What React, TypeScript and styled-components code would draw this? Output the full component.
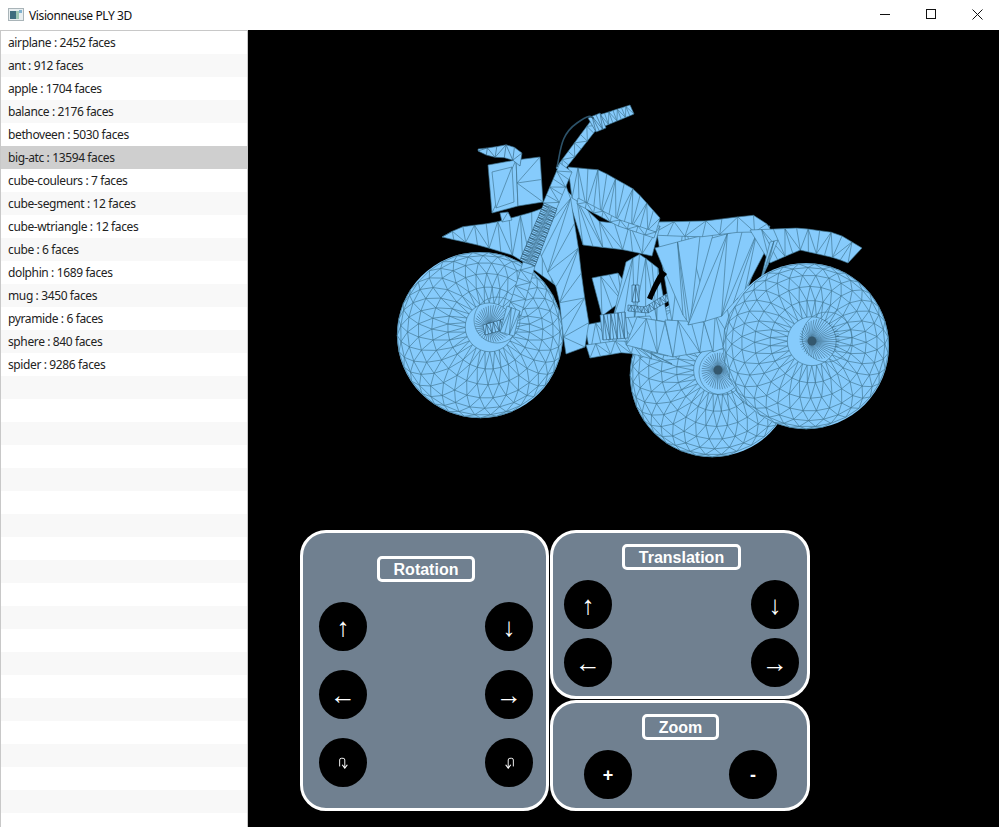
import React from 'react';
import styled, { createGlobalStyle } from 'styled-components';

const Global = createGlobalStyle`
  html, body { margin: 0; padding: 0; background: #000; }
  * { box-sizing: border-box; }
`;

const Window = styled.div`
  width: 999px; height: 827px; display: flex; flex-direction: column; overflow: hidden;
  font-family: "Noto Sans", "Open Sans", sans-serif; background: #fff;
`;
const TitleBar = styled.header`
  height: 30px; flex: none; display: flex; align-items: center; background: #fff; padding-left: 8px;
`;
const AppIcon = styled.svg` width: 16px; height: 16px; flex: none; margin-right: 5px; `;
const TitleText = styled.span` font-size: 12px; letter-spacing: -0.38px; color: #111; flex: 1; `;
const WindowButton = styled.div`
  width: 46px; height: 30px; padding: 0 0 2px 2px; display: flex; align-items: center; justify-content: center;
`;
const Body = styled.div` flex: 1; display: flex; min-height: 0; `;
const Sidebar = styled.ul`
  width: 248px; flex: none; margin: 0; padding: 0; list-style: none; overflow: hidden;
  border: 1px solid #c8c8c8; border-bottom: 0; background: #fff;
`;
const Row = styled.li<{ $alt: boolean; $selected: boolean }>`
  height: 23px; padding-left: 7px; font-size: 12px; line-height: 24px; letter-spacing: -0.38px; color: #222; white-space: nowrap;
  background: ${p => (p.$selected ? '#cfcfcf' : p.$alt ? '#f8f8f8' : '#fff')};
`;
const Viewport = styled.main` flex: 1; display: flex; flex-direction: column; background: #000; `;
const SceneSvg = styled.svg` display: block; width: 751px; height: 500px; flex: none; `;
const Controls = styled.section` display: flex; padding-left: 52px; gap: 1px; height: 281px; `;
const Stack = styled.div` display: flex; flex-direction: column; gap: 1px; width: 260px; `;
const Panel = styled.div<{ $w?: number; $h: number; $top: number; $l: number; $r: number }>`
  width: ${p => (p.$w ? `${p.$w}px` : '100%')}; height: ${p => p.$h}px; background: #708090;
  border: 3px solid #fff; border-radius: 26px; display: flex; flex-direction: column;
  padding: ${p => p.$top}px ${p => p.$r}px 0 ${p => p.$l}px;
`;
const Heading = styled.div<{ $w: number; $mb: number }>`
  width: ${p => p.$w}px; height: 26px; margin: 0 auto ${p => p.$mb}px; flex: none; padding-top: 1px;
  border: 3px solid #fff; border-radius: 5px; color: #fff; text-align: center;
  font: bold 16px/20px "Liberation Sans", Arial, sans-serif;
`;
const ButtonGrid = styled.div<{ $gap: number }>`
  display: grid; grid-template-columns: 48px 48px; justify-content: space-between; row-gap: ${p => p.$gap}px;
`;
const RoundButton = styled.button`
  width: 48px; height: 49px; padding: 0; border: 0; border-radius: 50%; background: #000; color: #fff;
  display: flex; align-items: center; justify-content: center;
  font: 26px/1 "Liberation Sans", Arial, sans-serif;
`;
const Sign = styled.span` font: bold 18px/1 "Liberation Sans", Arial, sans-serif; `;

type P = [number, number];
const FILL = '#86cbfc';
const LINE = '#40748f';
const DARK = '#2f5a73';

function resample(pts: P[], n: number): P[] {
  const d = [0];
  for (let i = 1; i < pts.length; i++) d.push(d[i - 1] + Math.hypot(pts[i][0] - pts[i - 1][0], pts[i][1] - pts[i - 1][1]));
  const total = d[d.length - 1];
  const out: P[] = [];
  for (let k = 0; k <= n; k++) {
    const t = (total * k) / n;
    let i = 1;
    while (i < pts.length - 1 && d[i] < t) i++;
    const f = (t - d[i - 1]) / (d[i] - d[i - 1] || 1);
    out.push([pts[i - 1][0] + (pts[i][0] - pts[i - 1][0]) * f, pts[i - 1][1] + (pts[i][1] - pts[i - 1][1]) * f]);
  }
  return out;
}
const f1 = (v: number) => v.toFixed(1);
const seg = (a: P, b: P) => `M${f1(a[0])} ${f1(a[1])}L${f1(b[0])} ${f1(b[1])}`;
const disc = (x: number, y: number, r: number) => `M${x - r} ${y}a${r} ${r} 0 1 0 ${2 * r} 0a${r} ${r} 0 1 0 ${-2 * r} 0Z`;

interface Part { fill: string; lines: string; color?: string; width?: number; solid?: string }

function strip(a: P[], b: P[], n: number, color?: string, width?: number): Part {
  const A = resample(a, n);
  const B = resample(b, n);
  let lines = '';
  for (let i = 0; i < n; i++) {
    lines += seg(A[i], A[i + 1]) + seg(B[i], B[i + 1]) + seg(A[i], B[i]);
    lines += i % 2 ? seg(A[i], B[i + 1]) : seg(B[i], A[i + 1]);
  }
  lines += seg(A[n], B[n]);
  const poly = [...A, ...[...B].reverse()];
  const fill = 'M' + poly.map(p => `${f1(p[0])} ${f1(p[1])}`).join('L') + 'Z';
  return { fill, lines, color, width };
}

function wheel(cx: number, cy: number, r: number, hx: number, hy: number, rx: number, ry: number, rr: number): Part[] {
  const px = (hx - cx) / r;
  const py = (hy - cy) / r;
  const pz = Math.sqrt(1 - px * px - py * py);
  const ul = Math.hypot(pz, px);
  const u = [pz / ul, 0, -px / ul];
  const v = [py * u[2] - pz * u[1], pz * u[0] - px * u[2], px * u[1] - py * u[0]];
  const M = 32;
  const pt = (theta: number, phi: number) => {
    const s = Math.sin(theta), c = Math.cos(theta), cp = Math.cos(phi), sp = Math.sin(phi);
    return {
      x: cx + r * (c * px + s * (cp * u[0] + sp * v[0])),
      y: cy + r * (c * py + s * (cp * u[1] + sp * v[1])),
      z: c * pz + s * (cp * u[2] + sp * v[2]),
    };
  };
  const rings = 7;
  const t0 = 0.3;
  const step = 0.22;
  let lines = '';
  const add = (a: ReturnType<typeof pt>, b: ReturnType<typeof pt>) => {
    if (a.z > -0.02 && b.z > -0.02) lines += seg([a.x, a.y], [b.x, b.y]);
  };
  const dphi = (Math.PI * 2) / M;
  for (let i = 0; i < rings; i++) {
    const t = t0 + i * step;
    for (let j = 0; j < M; j++) {
      const ph = (j + (i % 2) * 0.5) * dphi;
      const a = pt(t, ph);
      add(a, pt(t, ph + dphi));
      add(a, pt(t + step, ph + dphi / 2));
      add(a, pt(t + step, ph - dphi / 2));
    }
  }
  let spokes = '';
  const S = 44;
  for (let j = 0; j < S; j++) {
    const ph = (j * Math.PI * 2) / S;
    const a: P = [hx + 3 * Math.cos(ph), hy + 3 * Math.sin(ph)];
    const b: P = [(rx + hx) / 2 + rr * 0.8 * Math.cos(ph), (ry + hy) / 2 + rr * 0.8 * Math.sin(ph)];
    spokes += seg(a, b);
  }
  return [
    { fill: disc(cx, cy, r), lines },
    { fill: '', lines: disc(rx, ry, rr), color: LINE, width: 0.6 },
    { fill: '', lines: spokes, color: '#2f566e', width: 0.5 },
    { fill: '', lines: '', solid: disc(hx, hy, 4.5) },
  ];
}

const scene: Part[] = [
  ...wheel(712, 375, 82, 718, 370, 722, 372, 23),
  // engine
  strip([[592, 278], [618, 273]], [[602, 316], [632, 293]], 3),
  strip([[626, 262], [640, 254], [658, 268]], [[612, 322], [640, 318], [668, 322]], 5),
  strip([[628, 305], [645, 307], [668, 293]], [[628, 311], [648, 313], [672, 299]], 14, '#33627d'),
  strip([[632, 285], [639, 285]], [[632, 302], [639, 302]], 2, '#2d5770'),
  // rear backing
  strip([[655, 222], [712, 222], [770, 226]], [[672, 322], [700, 330], [745, 296]], 4),
  strip([[585, 325], [620, 318], [650, 316]], [[590, 354], [630, 348], [668, 356]], 6),
  strip([[600, 315], [625, 312]], [[603, 340], [628, 338]], 7, '#33627d'),
  strip([[586, 345], [622, 340], [660, 358]], [[590, 358], [625, 352], [672, 364]], 8),
  strip([[637, 317], [665, 322]], [[626, 345], [673, 357]], 3),
  strip([[665, 320], [704, 322]], [[673, 357], [713, 350]], 3),
  strip([[704, 322], [738, 298]], [[713, 352], [745, 340]], 3),
  // rear body
  strip([[655, 248], [700, 236]], [[683, 315], [690, 325]], 2),
  strip([[712, 238], [748, 228], [770, 242]], [[688, 325], [720, 318], [745, 290]], 4),
  strip([[658, 222], [705, 221], [753, 215], [767, 224]], [[650, 235], [700, 237], [740, 232], [772, 232]], 7),
  strip([[750, 230], [800, 228], [837, 233], [862, 248]], [[770, 263], [800, 250], [835, 258], [848, 263]], 10),
  strip([[770, 242], [778, 240]], [[760, 282], [768, 265]], 2),
  // frame under tank
  strip([[566, 190], [600, 222], [660, 226]], [[583, 245], [625, 250], [652, 256]], 7),
  // tank
  strip([[568, 167], [600, 170], [635, 190], [660, 218]], [[572, 198], [595, 212], [625, 226], [656, 232]], 11),
  strip([[578, 198], [620, 220], [656, 232]], [[577, 204], [618, 226], [654, 238]], 9),
  // right wheel
  ...wheel(806, 346, 83, 812, 341, 827, 337, 25),
  // front wheel
  ...wheel(480, 335, 83, 490, 327, 497, 320, 23),
  // front fender & frame
  strip([[442, 237], [460, 227], [493, 223], [540, 210], [562, 195]], [[442, 237], [482, 246], [515, 256], [562, 290]], 11),
  strip([[562, 175], [570, 195], [580, 258], [582, 282], [590, 330], [585, 347]], [[535, 240], [553, 285], [558, 288], [565, 352], [566, 354]], 7),
  // headlight
  strip([[488, 165], [492, 213]], [[516, 160], [518, 206]], 1),
  strip([[516, 160], [518, 206]], [[540, 157], [543, 202]], 2),
  strip([[492, 172], [496, 208]], [[512, 167], [514, 202]], 1),
  strip([[500, 213], [508, 212]], [[502, 222], [512, 220]], 1),
  // bars
  strip([[478, 149], [495, 147], [510, 144], [522, 153]], [[478, 151], [490, 157], [510, 158], [520, 166]], 5, '#33627d'),
  strip([[556, 168], [575, 142], [593, 118]], [[562, 173], [582, 148], [600, 125]], 6),
  strip([[596, 116], [630, 105]], [[600, 128], [634, 114]], 8),
  strip([[588, 118], [600, 113]], [[596, 132], [606, 128]], 3, '#33627d'),
  // fork
  strip([[560, 163], [543, 203]], [[572, 172], [556, 210]], 5),
  strip([[523, 262], [508, 310]], [[535, 266], [521, 316]], 6),
  strip([[544, 203], [520, 260]], [[557, 209], [535, 266]], 28, DARK),
  strip([[483, 325], [507, 318]], [[485, 335], [510, 328]], 7, '#2d5770'),
  strip([[507, 306], [520, 311]], [[500, 332], [514, 336]], 3),
];

const Bike = () => (
  <SceneSvg viewBox="248 30 751 500">
    {scene.map((p, i) => (
      <g key={i}>
        {p.fill && <path d={p.fill} fill={FILL} />}
        {p.lines && <path d={p.lines} fill="none" stroke={p.color ?? LINE} strokeWidth={p.width ?? 0.65} />}
        {p.solid && <path d={p.solid} fill="#34586e" />}
      </g>
    ))}
    <path d="M662 270C655 278 652 288 647 298L652 300C656 290 660 282 667 274Z" fill="#000" />
    <path d="M557 167C561 150 560 135 577 123S590 119 594 118" fill="none" stroke="#2c5269" strokeWidth={1.6} />
  </SceneSvg>
);

const items = [
  'airplane : 2452 faces', 'ant : 912 faces', 'apple : 1704 faces', 'balance : 2176 faces', 'bethoveen : 5030 faces',
  'big-atc : 13594 faces', 'cube-couleurs : 7 faces', 'cube-segment : 12 faces', 'cube-wtriangle : 12 faces', 'cube : 6 faces',
  'dolphin : 1689 faces', 'mug : 3450 faces', 'pyramide : 6 faces', 'sphere : 840 faces', 'spider : 9286 faces',
];
const rows = Array.from({ length: 35 }, (_, i) => items[i] ?? '');

const UTurn = ({ flip }: { flip?: boolean }) => (
  <svg width="11" height="12" viewBox="0 0 12 14" style={flip ? { transform: 'scaleX(-1)' } : undefined}>
    <path d="M1.5 11V3.5Q1.5 1.5 3.5 1.5H5.5Q7.5 1.5 7.5 3.5V12" fill="none" stroke="#fff" strokeWidth="1.1" />
    <path d="M4.5 9L7.5 13L10.5 9" fill="none" stroke="#fff" strokeWidth="1.3" />
  </svg>
);

export default function App() {
  return (
    <Window>
      <Global />
      <TitleBar>
        <AppIcon viewBox="0 0 16 16">
          <rect x="0.5" y="1.5" width="15" height="12" fill="#e8eef0" stroke="#a9b4b8" />
          <rect x="2" y="4" width="6" height="8" fill="#3f6d7f" />
          <rect x="8" y="4" width="3" height="8" fill="#9fc7b5" />
          <rect x="11" y="3" width="3" height="3" fill="#7fb2d0" />
        </AppIcon>
        <TitleText>Visionneuse PLY 3D</TitleText>
        <WindowButton>
          <svg width="10" height="10" viewBox="0 0 10 10"><path d="M0 5.5H10" stroke="#111" /></svg>
        </WindowButton>
        <WindowButton>
          <svg width="10" height="10" viewBox="0 0 10 10"><rect x="0.5" y="0.5" width="9" height="9" fill="none" stroke="#111" /></svg>
        </WindowButton>
        <WindowButton>
          <svg width="11" height="11" viewBox="0 0 11 11"><path d="M0.5 0.5L10.5 10.5M10.5 0.5L0.5 10.5" stroke="#111" /></svg>
        </WindowButton>
      </TitleBar>
      <Body>
        <Sidebar>
          {rows.map((t, i) => (
            <Row key={i} $alt={i % 2 === 1} $selected={i === 5}>{t}</Row>
          ))}
        </Sidebar>
        <Viewport>
          <Bike />
          <Controls>
            <Panel $w={249} $h={281} $top={23} $l={16} $r={13}>
              <Heading $w={98} $mb={20}>Rotation</Heading>
              <ButtonGrid $gap={19}>
                <RoundButton>↑</RoundButton><RoundButton>↓</RoundButton>
                <RoundButton>←</RoundButton><RoundButton>→</RoundButton>
                <RoundButton><UTurn /></RoundButton><RoundButton><UTurn flip /></RoundButton>
              </ButtonGrid>
            </Panel>
            <Stack>
              <Panel $h={169} $top={11} $l={11} $r={8}>
                <Heading $w={119} $mb={10}>Translation</Heading>
                <ButtonGrid $gap={9}>
                  <RoundButton>↑</RoundButton><RoundButton>↓</RoundButton>
                  <RoundButton>←</RoundButton><RoundButton>→</RoundButton>
                </ButtonGrid>
              </Panel>
              <Panel $h={111} $top={11} $l={31} $r={30}>
                <Heading $w={77} $mb={10}>Zoom</Heading>
                <ButtonGrid $gap={0}>
                  <RoundButton><Sign>+</Sign></RoundButton><RoundButton><Sign>-</Sign></RoundButton>
                </ButtonGrid>
              </Panel>
            </Stack>
          </Controls>
        </Viewport>
      </Body>
    </Window>
  );
}
